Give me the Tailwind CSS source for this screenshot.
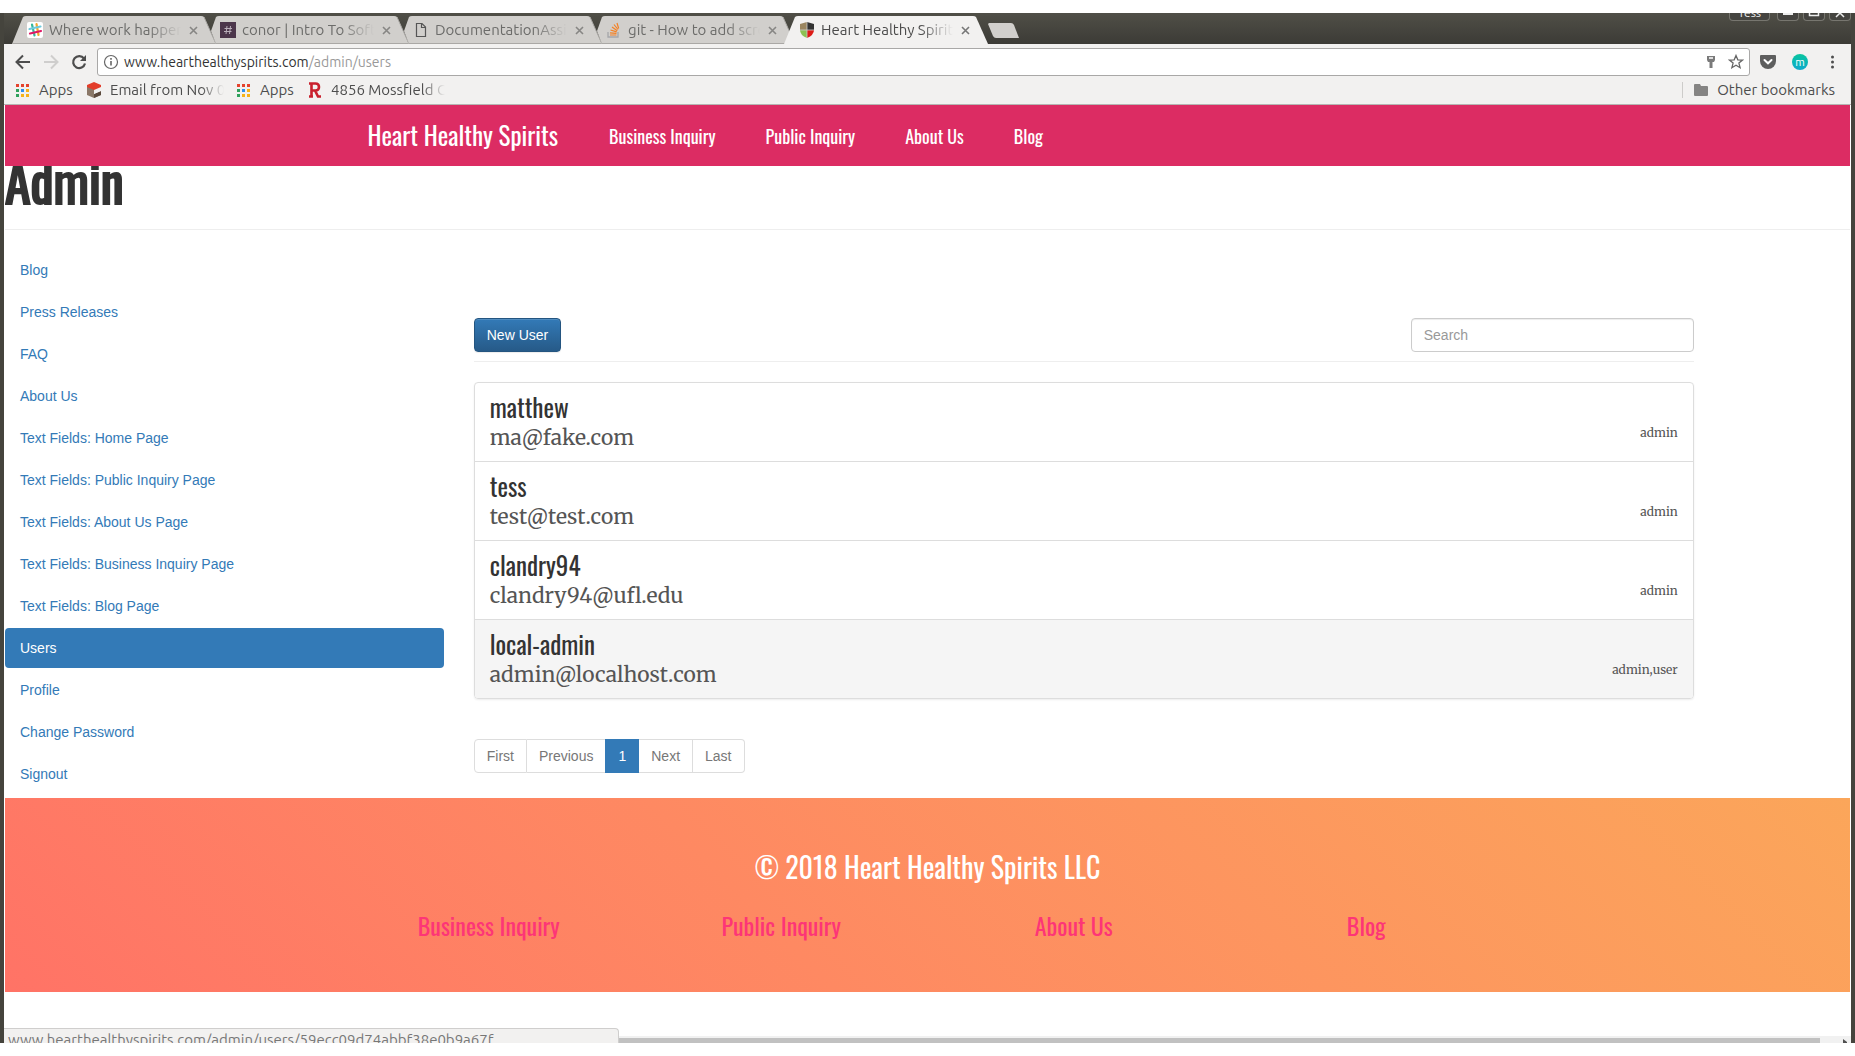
<!DOCTYPE html>
<html lang="en">
<head>
<meta charset="utf-8">
<title>Heart Healthy Spirits</title>
<script src="https://cdn.jsdelivr.net/npm/@tailwindcss/browser@4"></script>
</head>
<body class="h-screen overflow-hidden bg-white py-[13px] font-['Liberation_Sans',sans-serif] text-sm text-[#333]">
<div class="flex h-full flex-col overflow-hidden border-x-4 border-[#45443d] bg-white">

  <!-- Tab strip -->
  <header class="relative flex h-[31px] shrink-0 items-end bg-linear-to-b from-[#504f47] to-[#3c3b36] pl-2 font-[Ubuntu,'Noto_Sans',sans-serif] text-[15px] text-[#6c6c6a]">
    <div class="relative -mr-[11px] flex h-7 w-[204px] items-center pr-[18px] pl-[15px]">
      <svg class="absolute inset-0 size-full" viewBox="0 0 204 28" preserveAspectRatio="none"><path d="M0 28 11 1Q12 0 14 0H189Q191 0 192 1L204 28Z" fill="#d1cfcc"/><path d="M0 27.500H204M192 1 204 28" stroke="#aaa8a5" fill="none"/></svg>
      <svg class="relative mr-[6px] size-4 shrink-0" viewBox="0 0 16 16"><rect width="16" height="16" rx="2" fill="#fff"/><g stroke-width="2.200" stroke-linecap="round"><path d="M5 2.500 7.500 13.500" stroke="#36b69a"/><path d="M9.500 2 11.500 13" stroke="#f2a72e"/><path d="M2.500 7 13.500 4.500" stroke="#6dcadd"/><path d="M3 11.500 14 9" stroke="#e01765"/></g></svg>
      <span class="relative flex-1 overflow-hidden mask-r-from-75% whitespace-nowrap">Where work happens</span>
      <button aria-label="Close tab" class="relative ml-2 shrink-0"><svg class="size-[9px]" viewBox="0 0 9 9"><path d="m1 1 7 7M8 1 1 8" stroke="#878684" stroke-width="1.600"/></svg></button>
    </div>
    <div class="relative -mr-[11px] flex h-7 w-[204px] items-center pr-[18px] pl-[15px]">
      <svg class="absolute inset-0 size-full" viewBox="0 0 204 28" preserveAspectRatio="none"><path d="M6 15 11 1Q12 0 14 0H189Q191 0 192 1L204 28H11Z" fill="#d1cfcc"/><path d="M11 27.500H204M192 1 204 28" stroke="#aaa8a5" fill="none"/></svg>
      <svg class="relative mr-[6px] size-4 shrink-0" viewBox="0 0 16 16"><rect width="16" height="16" fill="#4c364b"/><path d="M7 4 6 12M10.500 4 9.500 12M4.500 6.500H12M4 9.500H11.500" stroke="#b9aeb9" fill="none"/></svg>
      <span class="relative flex-1 overflow-hidden mask-r-from-75% whitespace-nowrap">conor | Intro To Software</span>
      <button aria-label="Close tab" class="relative ml-2 shrink-0"><svg class="size-[9px]" viewBox="0 0 9 9"><path d="m1 1 7 7M8 1 1 8" stroke="#878684" stroke-width="1.600"/></svg></button>
    </div>
    <div class="relative -mr-[11px] flex h-7 w-[204px] items-center pr-[18px] pl-[15px]">
      <svg class="absolute inset-0 size-full" viewBox="0 0 204 28" preserveAspectRatio="none"><path d="M6 15 11 1Q12 0 14 0H189Q191 0 192 1L204 28H11Z" fill="#d1cfcc"/><path d="M11 27.500H204M192 1 204 28" stroke="#aaa8a5" fill="none"/></svg>
      <svg class="relative mr-[6px] size-4 shrink-0" viewBox="0 0 16 16"><path d="M3.500 1.500H9L12.500 5V14.500H3.500ZM8.500 1.500V5.500H12.500" stroke="#555" stroke-width="1.200" fill="none"/></svg>
      <span class="relative flex-1 overflow-hidden mask-r-from-75% whitespace-nowrap">DocumentationAssignment</span>
      <button aria-label="Close tab" class="relative ml-2 shrink-0"><svg class="size-[9px]" viewBox="0 0 9 9"><path d="m1 1 7 7M8 1 1 8" stroke="#878684" stroke-width="1.600"/></svg></button>
    </div>
    <div class="relative -mr-[11px] flex h-7 w-[204px] items-center pr-[18px] pl-[15px]">
      <svg class="absolute inset-0 size-full" viewBox="0 0 204 28" preserveAspectRatio="none"><path d="M6 15 11 1Q12 0 14 0H189Q191 0 192 1L204 28H11Z" fill="#d1cfcc"/><path d="M11 27.500H204M192 1 204 28" stroke="#aaa8a5" fill="none"/></svg>
      <svg class="relative mr-[6px] size-4 shrink-0" viewBox="0 0 16 16"><path d="M2 10V15H12V10" stroke="#a5a7aa" stroke-width="1.300" fill="none"/><path d="M4 13H10.500M4 10.800 10.500 11.400M4.500 8 10.700 9.900M6 5 11.300 8.700M8 2.500 12 7.500M11 1 12.700 6.500" stroke="#f48024" stroke-width="1.200"/></svg>
      <span class="relative flex-1 overflow-hidden mask-r-from-75% whitespace-nowrap">git - How to add screen</span>
      <button aria-label="Close tab" class="relative ml-2 shrink-0"><svg class="size-[9px]" viewBox="0 0 9 9"><path d="m1 1 7 7M8 1 1 8" stroke="#878684" stroke-width="1.600"/></svg></button>
    </div>
    <div class="relative flex h-7 w-[204px] items-center pr-[18px] pl-[15px] text-[#4b4b4b]">
      <svg class="absolute inset-0 size-full" viewBox="0 0 204 28" preserveAspectRatio="none"><path d="M0 28 11 1Q12 0 14 0H189Q191 0 192 1L204 28Z" fill="#f2f1f0"/></svg>
      <svg class="relative mr-[6px] size-4 shrink-0" viewBox="0 0 16 16"><path d="M8 0 1 2V8H8Z" fill="#9b8660"/><path d="M8 0 15 2V8H8Z" fill="#333"/><path d="M1 8H8V16Q1 13 1 8Z" fill="#8cc152"/><path d="M15 8H8V16Q15 13 15 8Z" fill="#dd1b16"/><path d="M8 0V16M1 8H15" stroke="#ccc" stroke-width=".8"/></svg>
      <span class="relative flex-1 overflow-hidden mask-r-from-75% whitespace-nowrap">Heart Healthy Spirits</span>
      <button aria-label="Close tab" class="relative ml-2 shrink-0"><svg class="size-[9px]" viewBox="0 0 9 9"><path d="m1 1 7 7M8 1 1 8" stroke="#777" stroke-width="1.600"/></svg></button>
    </div>
    <button aria-label="New tab" class="mb-[6px]"><svg class="h-[15px] w-8" viewBox="0 0 32 15"><path d="M1 0H23Q25 0 26 2L31 15H8Q6 15 5 13L0 1Z" fill="#d1cfcc"/></svg></button>
    <div class="ml-auto flex h-full items-start gap-1 overflow-hidden text-xs leading-3 text-[#eee]">
      <button class="mr-[3px] h-2 w-[41px] overflow-hidden rounded-b-sm border border-t-0 border-[#77766f] bg-[#454440]"><span class="-mt-2 block">Tess</span></button>
      <button aria-label="Minimize" class="h-2 w-[22px] rounded-b-sm border border-t-0 border-[#77766f] bg-[#454440]"><svg class="mx-auto h-[7px] w-3" viewBox="0 0 12 7"><path d="M1 1H11" stroke="#eee" stroke-width="2"/></svg></button>
      <button aria-label="Maximize" class="h-2 w-[22px] rounded-b-sm border border-t-0 border-[#77766f] bg-[#454440]"><svg class="mx-auto h-[7px] w-3" viewBox="0 0 12 7"><path d="M1.500 0V2.500H10.500V0" stroke="#eee" stroke-width="1.500" fill="none"/></svg></button>
      <button aria-label="Close" class="h-2 w-[22px] rounded-b-sm border border-t-0 border-[#77766f] bg-[#454440]"><svg class="mx-auto h-[7px] w-3" viewBox="0 0 12 7"><path d="M2 4 6 0 10 4" stroke="#eee" stroke-width="1.500" fill="none"/></svg></button>
    </div>
  </header>

  <!-- Toolbar and bookmarks -->
  <div class="flex h-[61px] shrink-0 flex-col border-b border-[#b6b4b2] bg-[#f2f1f0] font-[Ubuntu,'Noto_Sans',sans-serif] text-[15px] text-[#4d4d4d]">
    <div class="flex items-center pt-1 pl-[11px]">
      <button aria-label="Back"><svg class="size-4" viewBox="0 0 16 16"><path d="M15 8H2M8 1.500 1.500 8 8 14.500" stroke="#4d4d4d" stroke-width="2" fill="none"/></svg></button>
      <button aria-label="Forward" class="ml-3"><svg class="size-4" viewBox="0 0 16 16"><path d="M1 8H14M8 1.500 14.500 8 8 14.500" stroke="#cfcecd" stroke-width="2" fill="none"/></svg></button>
      <button aria-label="Reload" class="ml-3"><svg class="size-4" viewBox="0 0 16 16"><path d="M13 4.500A6 6 0 1 0 14 9.500" stroke="#4d4d4d" stroke-width="2.200" fill="none"/><path d="M15 1V7H9Z" fill="#4d4d4d"/></svg></button>
      <div class="ml-[10px] flex h-7 flex-1 items-center rounded-[3px] border border-[#a9a8a7] bg-white pr-[5px] pl-[5px]">
        <svg class="size-4" viewBox="0 0 16 16"><circle cx="8" cy="8" r="6.500" stroke="#666" stroke-width="1.200" fill="none"/><path d="M8 7V11.500M8 4V5.700" stroke="#666" stroke-width="1.600"/></svg>
        <p class="ml-[5px] flex-1 text-sm text-[#999]"><a href="#" class="text-[#333]">www.hearthealthyspirits.com</a>/admin/users</p>
        <svg class="mr-[9px] size-4" viewBox="0 0 16 16"><path d="M4 2H12V6L11 8H9.500V14H6.500V8H5L4 6Z" fill="#7a7a7a"/><path d="M6 4H10" stroke="#fff" stroke-width="1.500"/></svg>
        <button aria-label="Bookmark this page"><svg class="size-4" viewBox="0 0 16 16"><path d="m8 1.500 1.800 4.300 4.700.3-3.600 3 1.200 4.600L8 11.200 3.900 13.700 5.100 9.100 1.500 6.100l4.700-.3Z" stroke="#666" stroke-width="1.300" fill="none"/></svg></button>
      </div>
      <div class="flex w-[101px] items-center gap-4 pl-[10px]">
        <svg class="size-4" viewBox="0 0 16 16"><path d="M1 1H15Q16 1 16 2V7A8 8 0 0 1 0 7V2Q0 1 1 1Z" fill="#5e5e5e"/><path d="m4.500 6 3.500 3.300L11.500 6" stroke="#fff" stroke-width="2" fill="none" stroke-linecap="round"/></svg>
        <span class="flex size-4 items-center justify-center rounded-full bg-linear-to-b from-[#0cc59d] to-[#12a9cc] text-[11px] leading-4 text-white">m</span>
        <button aria-label="Menu"><svg class="size-4" viewBox="0 0 16 16" fill="#4d4d4d"><circle cx="8.500" cy="3" r="1.500"/><circle cx="8.500" cy="8" r="1.500"/><circle cx="8.500" cy="13" r="1.500"/></svg></button>
      </div>
    </div>
    <div class="flex h-7 items-center pr-4 pl-3">
      <svg class="size-[13px]" viewBox="0 0 13 13"><path d="M0 0h3v3H0zM5 0h3v3H5zM10 0h3v3h-3z" fill="#e5432d"/><path d="M0 5h3v3H0zM0 10h3v3H0z" fill="#2fa15c"/><path d="M5 5h3v3H5z" fill="#2e90ef"/><path d="M10 5h3v3h-3zM5 10h3v3H5zM10 10h3v3h-3z" fill="#f6b21a"/></svg>
      <a href="#" class="ml-[10px] w-[47px]">Apps</a>
      <svg class="size-4" viewBox="0 0 16 16"><path d="M8 0 15 3V7L8 10 1 7V3Z" fill="#e33e2b"/><path d="M1 5V9L8 12V8ZM8 12 15 9V13L8 16 1 13V9Z" fill="#8b7868"/><path d="M8 12 15 9V13L8 16Z" fill="#5c4a3d"/><path d="M15 5V9L8 12V8Z" fill="#f2f1f0"/></svg>
      <a href="#" class="ml-2 w-[114px] overflow-hidden mask-r-from-80% whitespace-nowrap">Email from Nov 02</a>
      <svg class="ml-[13px] size-[13px]" viewBox="0 0 13 13"><path d="M0 0h3v3H0zM5 0h3v3H5zM10 0h3v3h-3z" fill="#e5432d"/><path d="M0 5h3v3H0zM0 10h3v3H0z" fill="#2fa15c"/><path d="M5 5h3v3H5z" fill="#2e90ef"/><path d="M10 5h3v3h-3zM5 10h3v3H5zM10 10h3v3h-3z" fill="#f6b21a"/></svg>
      <a href="#" class="ml-[10px] w-[47px]">Apps</a>
      <svg class="size-4" viewBox="0 0 16 16"><path d="M2 1.500H8.500Q12 1.500 12 5T8.500 8.500H5M4.500 1V15M2 14.500H6M8 8.500 11 14.500H14" stroke="#c9202d" stroke-width="2.600" fill="none"/></svg>
      <a href="#" class="ml-2 w-[114px] overflow-hidden mask-r-from-80% whitespace-nowrap">4856 Mossfield Ct</a>
      <div class="ml-auto flex items-center border-l border-[#cdccca] pl-[11px]"><svg class="h-3 w-[14px]" viewBox="0 0 14 12"><path d="M1 0H6L7 2H13Q14 2 14 3V11Q14 12 13 12H1Q0 12 0 11V1Q0 0 1 0Z" fill="#858483"/></svg><a href="#" class="ml-[9px] leading-4">Other bookmarks</a></div>
    </div>
  </div>

  <!-- Web page -->
  <div class="relative flex-1 overflow-hidden px-px">
    <nav class="h-[61px] bg-[#dc2c63] font-[Oswald,'Liberation_Sans_Narrow',sans-serif] text-white">
      <div class="mx-auto flex h-full max-w-[1170px] items-center gap-[50px] pl-[25px] text-lg">
        <a href="#" class="pr-px text-[25px]">Heart Healthy Spirits</a>
        <a href="#">Business Inquiry</a><a href="#">Public Inquiry</a><a href="#">About Us</a><a href="#">Blog</a>
      </div>
    </nav>
    <div class="h-16 overflow-hidden border-b border-[#eee]">
      <h1 class="font-[Oswald,'Liberation_Sans_Narrow',sans-serif] text-[52px] leading-[29px] font-normal [-webkit-text-stroke:2px_#333]">Admin</h1>
    </div>

    <div class="grid grid-cols-12 gap-x-[30px] pt-5">
      <ul class="col-span-3 flex flex-col gap-[2px] pb-1 leading-5 text-[#337ab7]">
        <li><a href="#" class="block px-[15px] py-[10px]">Blog</a></li>
        <li><a href="#" class="block px-[15px] py-[10px]">Press Releases</a></li>
        <li><a href="#" class="block px-[15px] py-[10px]">FAQ</a></li>
        <li><a href="#" class="block px-[15px] py-[10px]">About Us</a></li>
        <li><a href="#" class="block px-[15px] py-[10px]">Text Fields: Home Page</a></li>
        <li><a href="#" class="block px-[15px] py-[10px]">Text Fields: Public Inquiry Page</a></li>
        <li><a href="#" class="block px-[15px] py-[10px]">Text Fields: About Us Page</a></li>
        <li><a href="#" class="block px-[15px] py-[10px]">Text Fields: Business Inquiry Page</a></li>
        <li><a href="#" class="block px-[15px] py-[10px]">Text Fields: Blog Page</a></li>
        <li><a href="#" class="block rounded bg-[#337ab7] px-[15px] py-[10px] text-white">Users</a></li>
        <li><a href="#" class="block px-[15px] py-[10px]">Profile</a></li>
        <li><a href="#" class="block px-[15px] py-[10px]">Change Password</a></li>
        <li><a href="#" class="block px-[15px] py-[10px]">Signout</a></li>
      </ul>

      <main class="col-span-8 pt-[68px]">
        <div class="mb-5 flex justify-between border-b border-[#eee] pb-[9px]">
          <button class="h-[34px] rounded border border-[#245580] bg-linear-to-b from-[#337ab7] to-[#265a88] px-3 text-white shadow-[inset_0_1px_0_rgba(255,255,255,0.15),0_1px_1px_rgba(0,0,0,0.075)]">New User</button>
          <input type="search" aria-label="Search" placeholder="Search" class="h-[34px] w-[283px] rounded border border-[#ccc] px-3 shadow-[inset_0_1px_1px_rgba(0,0,0,0.075)] placeholder:text-[#999]">
        </div>
        <ul class="divide-y divide-[#ddd] overflow-hidden rounded border border-[#ddd] font-[Merriweather,'Noto_Serif','DejaVu_Serif',serif] text-[#555] shadow-[0_1px_2px_rgba(0,0,0,0.075)]">
          <li class="box-content flex h-[78px] items-center justify-between px-[15px]"><div><h4 class="font-[Oswald,'Liberation_Sans_Narrow',sans-serif] text-[25px] leading-8 text-[#333]">matthew</h4><p class="text-[21px] leading-[30px]">ma@fake.com</p></div><span class="pt-[22px] text-xs">admin</span></li>
          <li class="box-content flex h-[78px] items-center justify-between px-[15px]"><div><h4 class="font-[Oswald,'Liberation_Sans_Narrow',sans-serif] text-[25px] leading-8 text-[#333]">tess</h4><p class="text-[21px] leading-[30px]">test@test.com</p></div><span class="pt-[22px] text-xs">admin</span></li>
          <li class="box-content flex h-[78px] items-center justify-between px-[15px]"><div><h4 class="font-[Oswald,'Liberation_Sans_Narrow',sans-serif] text-[25px] leading-8 text-[#333]">clandry94</h4><p class="text-[21px] leading-[30px]">clandry94@ufl.edu</p></div><span class="pt-[22px] text-xs">admin</span></li>
          <li class="box-content flex h-[78px] items-center justify-between bg-[#f5f5f5] px-[15px]"><div><h4 class="font-[Oswald,'Liberation_Sans_Narrow',sans-serif] text-[25px] leading-8 text-[#333]">local-admin</h4><p class="text-[21px] leading-[30px]">admin@localhost.com</p></div><span class="pt-[22px] text-xs">admin,user</span></li>
        </ul>
        <div class="mt-10 flex h-[34px] w-fit text-[#777]">
          <button class="rounded-l border border-[#ddd] px-3">First</button>
          <button class="border-y border-[#ddd] px-3">Previous</button>
          <button class="bg-[#337ab7] px-[13px] text-white">1</button>
          <button class="border-y border-r border-[#ddd] px-3">Next</button>
          <button class="rounded-r border border-l-0 border-[#ddd] px-3">Last</button>
        </div>
      </main>
    </div>

    <footer class="h-[194px] bg-linear-45 from-[#ff7366] to-[#fba65a] pt-[46px] font-[Oswald,'Liberation_Sans_Narrow',sans-serif]">
      <p class="text-center text-[28px] leading-[46px] text-white">© 2018 Heart Healthy Spirits LLC</p>
      <div class="mx-auto mt-[17px] grid max-w-[1170px] grid-cols-4 text-center text-2xl leading-9 text-[#fd3577]">
        <a href="#">Business Inquiry</a><a href="#">Public Inquiry</a><a href="#">About Us</a><a href="#">Blog</a>
      </div>
    </footer>

    <!-- Horizontal scrollbar and link preview over the page -->
    <div class="absolute inset-x-0 bottom-0 flex h-[7px] items-end bg-[#f1f1f1] pr-[31px]"><div class="h-[5px] flex-1 bg-[#c1c1c1]"></div></div>
    <svg class="absolute right-1 bottom-0 h-1 w-[5px]" viewBox="0 0 5 4"><path d="M1 0V4H5V3Z" fill="#505050"/></svg>
    <div class="absolute bottom-0 left-0 h-[15px] w-[615px] overflow-hidden rounded-tr border-t border-r border-[#cfcecd] bg-[#f2f1f0] pt-px pl-1 font-[Ubuntu,'Noto_Sans',sans-serif] text-[15px] leading-5 text-[#777]">www.hearthealthyspirits.com/admin/users/59ecc09d74abbf38e0b9a67f</div>
  </div>
</div>
</body>
</html>
